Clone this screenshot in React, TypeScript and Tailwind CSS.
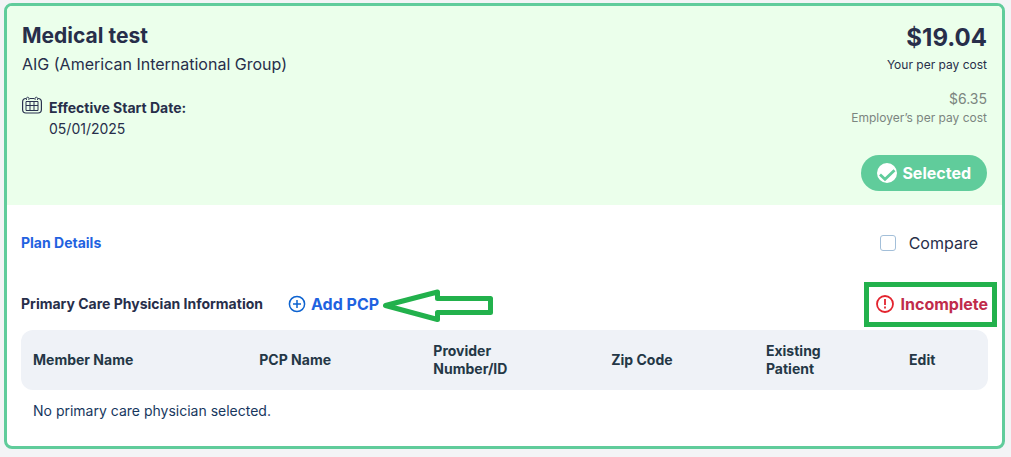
import { useState } from "react";

const columns = [
  { label: "Member Name", width: "w-[23.4%]" },
  { label: "PCP Name", width: "w-[18%]" },
  { label: "Provider Number/ID", width: "w-[18.4%]" },
  { label: "Zip Code", width: "w-[16%]" },
  { label: "Existing Patient", width: "w-[14.8%]" },
  { label: "Edit", width: "w-[9.4%]" },
];

function CalendarIcon() {
  return (
    <svg width="20" height="18" viewBox="0 0 20 18" fill="none" stroke="#2b3350" aria-hidden="true">
      <path
        d="M7.500 2.500h5M4 2.500C1.800 2.500.6 3.700.6 6v7.500c0 2.300 1.200 3.500 3.400 3.500h12c2.200 0 3.400-1.200 3.400-3.500V6c0-2.300-1.200-3.500-3.400-3.500"
        strokeWidth="1.2"
      />
      <path d="M4.500 4V2.400a1.200 1.200 0 0 1 2.400 0V4M13.100 4V2.400a1.200 1.200 0 0 1 2.400 0V4" strokeWidth="0.9" />
      <path d="M4 5.5h12v9H4zM4 9.5h12M8 5.5v9M12 5.5v9" strokeWidth="1" />
    </svg>
  );
}

function CheckIcon() {
  return (
    <svg width="20" height="20" viewBox="0 0 20 20" aria-hidden="true">
      <circle cx="10" cy="10" r="10" fill="#fff" />
      <path d="M3 11.500l5 4.800 9.500-9" fill="none" stroke="#60cc9b" strokeWidth="2.8" />
    </svg>
  );
}

function PlusIcon() {
  return (
    <svg width="18" height="18" viewBox="0 0 18 18" fill="none" stroke="#0d63d0" aria-hidden="true">
      <circle cx="9" cy="9" r="7.6" strokeWidth="1.5" />
      <path d="M9 5v8M5 9h8" strokeWidth="1.5" />
    </svg>
  );
}

function AlertIcon() {
  return (
    <svg width="18" height="18" viewBox="0 0 18 18" fill="none" stroke="#e3242f" aria-hidden="true">
      <circle cx="9" cy="9" r="8" strokeWidth="1.8" />
      <path d="M9 4v6M9 11.5v2" strokeWidth="1.8" />
    </svg>
  );
}

function ArrowMark() {
  return (
    <svg
      className="pointer-events-none absolute top-1/2 left-full ml-1 -translate-y-1/2"
      width="112"
      height="38"
      viewBox="0 0 112 38"
      fill="none"
      stroke="#22b14c"
      strokeWidth="5"
      strokeLinejoin="round"
      aria-hidden="true"
    >
      <path d="M2.500 20.500L54.500 7V13.500H107.500V27.500H54.500V34.500Z" />
    </svg>
  );
}

export default function App() {
  const [compare, setCompare] = useState(false);

  return (
    <main className="bg-[#f3f4f6] pt-[3px] pr-1.5 pb-2 pl-1 font-[Inter,sans-serif] text-[#272e4a]">
      <article className="overflow-hidden rounded-lg border-3 border-[#60cc9b] bg-white">
        <header className="flex justify-between bg-[#ebffeb] px-[15px] pt-4 pb-3.5">
          <div>
            <h1 className="text-[21px] leading-7 font-bold">Medical test</h1>
            <p className="mt-0.5 text-base leading-6">AIG (American International Group)</p>
            <div className="mt-5 flex gap-[7px] text-sm leading-[21px]">
              <CalendarIcon />
              <dl className="pt-px">
                <dt className="font-bold">Effective Start Date:</dt>
                <dd>05/01/2025</dd>
              </dl>
            </div>
          </div>
          <div className="flex flex-col items-end">
            <p className="text-2xl leading-8 font-bold">$19.04</p>
            <p className="text-xs leading-[22px]">Your per pay cost</p>
            <p className="mt-3.5 text-sm leading-[18px] text-[#7b857f]">$6.35</p>
            <p className="text-xs leading-5 text-[#7b857f]">Employer’s per pay cost</p>
            <button
              type="button"
              className="mt-[27px] flex h-9 items-center gap-[5px] rounded-full bg-[#60cc9b] px-4 text-base font-bold text-white"
            >
              <CheckIcon />
              Selected
            </button>
          </div>
        </header>

        <section className="px-3.5 pt-[26px] pb-[25px]">
          <div className="flex items-center justify-between leading-6">
            <a href="#plan-details" className="text-sm leading-6 font-bold text-[#1f62e0]">
              Plan Details
            </a>
            <label className="flex items-center gap-[13px] pr-2.5 text-base">
              <input
                type="checkbox"
                checked={compare}
                onChange={(event) => setCompare(event.target.checked)}
                className="size-4 appearance-none rounded-[3px] border border-[#a3bfd9] bg-white checked:bg-[#60cc9b]"
              />
              Compare
            </label>
          </div>

          <div className="mt-[37px] flex items-center justify-between leading-6">
            <div className="flex items-center gap-[25px]">
              <h2 className="text-sm leading-6 font-bold">Primary Care Physician Information</h2>
              <div className="relative">
                <button type="button" className="flex items-center gap-[5px] text-base font-bold text-[#1f62e0]">
                  <PlusIcon />
                  Add PCP
                </button>
                <ArrowMark />
              </div>
            </div>
            <p className="relative flex items-center gap-[7px] text-base font-bold text-[#c02b4b]">
              <AlertIcon />
              Incomplete
              <span className="pointer-events-none absolute -top-2.5 -right-[9px] -bottom-[11px] -left-3 border-5 border-[#22b14c]" />
            </p>
          </div>

          <table className="mt-3.5 w-full table-fixed text-left text-sm">
            <thead>
              <tr className="h-[60px] bg-[#eff2f7] leading-[18px] text-[#243746]">
                {columns.map((column) => (
                  <th
                    key={column.label}
                    scope="col"
                    className={`${column.width} pr-12 pl-3 font-bold first:rounded-l-xl first:pr-0 last:rounded-r-xl last:pr-0`}
                  >
                    {column.label}
                  </th>
                ))}
              </tr>
            </thead>
            <tbody>
              <tr>
                <td colSpan={columns.length} className="px-3 pt-[11px] leading-5 text-[#17375e]">
                  No primary care physician selected.
                </td>
              </tr>
            </tbody>
          </table>
        </section>
      </article>
    </main>
  );
}
